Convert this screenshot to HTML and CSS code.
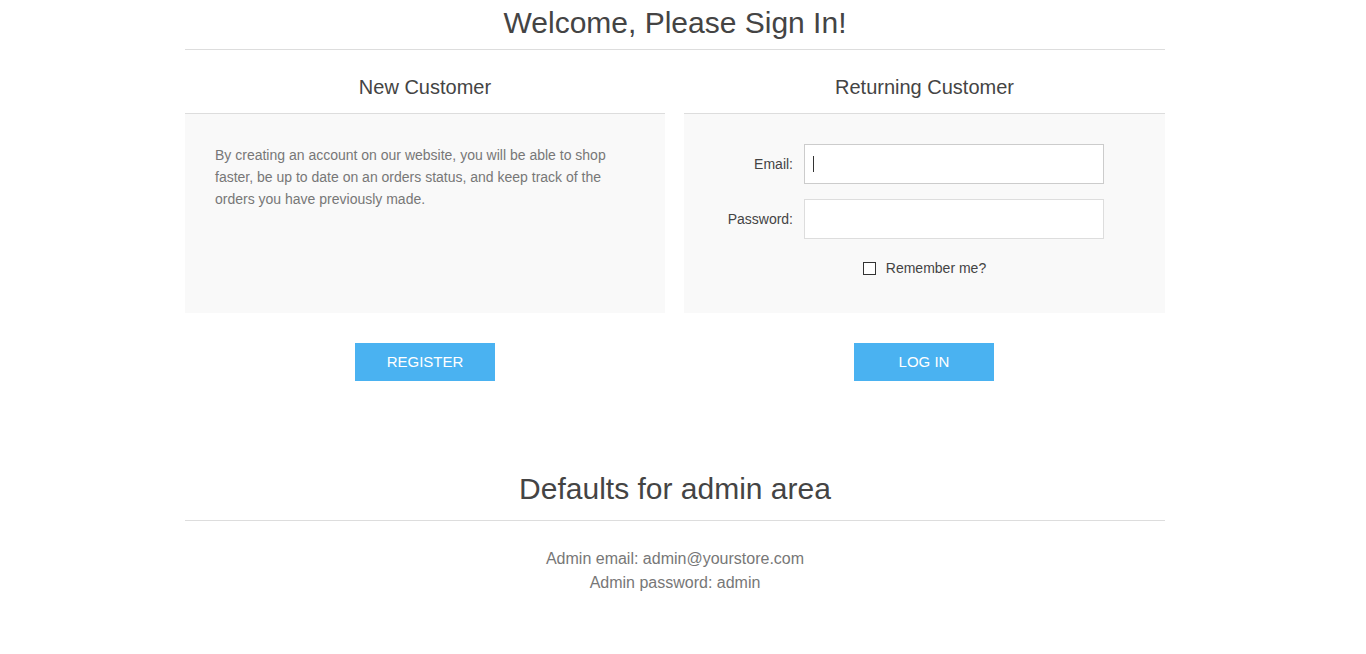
FILE: index.html
```html
<!DOCTYPE html>
<html lang="en">
<head>
<meta charset="utf-8">
<title>Login</title>
<link rel="stylesheet" href="styles.css">
</head>
<body>
<div class="page">
  <div class="page-title"><h1>Welcome, Please Sign In!</h1></div>
  <div class="columns">
    <div class="col">
      <div class="col-title"><strong>New Customer</strong></div>
      <div class="box">
        <p class="intro">By creating an account on our website, you will be able to shop faster, be up to date on an orders status, and keep track of the orders you have previously made.</p>
      </div>
      <div class="buttons"><button class="btn">Register</button></div>
    </div>
    <div class="col">
      <div class="col-title"><strong>Returning Customer</strong></div>
      <div class="box">
        <div class="form">
          <div class="row">
            <label>Email:</label>
            <span class="field focused"><input type="text"></span>
          </div>
          <div class="row">
            <label>Password:</label>
            <span class="field"><input type="password"></span>
          </div>
          <div class="remember">
            <span class="check"></span>
            <span>Remember me?</span>
          </div>
        </div>
      </div>
      <div class="buttons right"><button class="btn">Log in</button></div>
    </div>
  </div>
  <div class="page-title defaults"><h2>Defaults for admin area</h2></div>
  <div class="info">
    <div>Admin email: admin@yourstore.com</div>
    <div>Admin password: admin</div>
  </div>
</div>
</body>
</html>
```
FILE: styles.css
```css
* { box-sizing: border-box; }
html, body { margin: 0; background: #fff; }
body {
  padding-right: 16px;
  font-family: "Liberation Sans", Arial, sans-serif;
  color: #444;
}
.page {
  width: 980px;
  margin: 0 auto;
}
.page-title {
  border-bottom: 1px solid #ddd;
  padding: 3px 0 6px;
  text-align: center;
}
.page-title h1, .page-title h2 {
  margin: 0;
  font-size: 30px;
  line-height: 40px;
  font-weight: normal;
  color: #444;
}
.columns {
  display: grid;
  grid-template-columns: 480px 1fr;
  gap: 19px;
}
.col {
  display: flex;
  flex-direction: column;
}
.col-title {
  text-align: center;
  border-bottom: 1px solid #ddd;
  padding: 25px 0 14px;
  font-size: 20px;
  line-height: 24px;
}
.col-title strong { font-weight: normal; color: #444; }
.box {
  background: #f9f9f9;
  height: 199px;
  padding: 30px;
}
.intro {
  margin: 0;
  font-size: 14px;
  line-height: 22px;
  color: #777;
}
.form { margin: 0 -30px; }
.row {
  display: flex;
  align-items: center;
  margin-bottom: 15px;
}
.row label {
  width: 109px;
  text-align: right;
  margin-right: 11px;
  font-size: 14px;
  color: #444;
}
.field {
  position: relative;
  display: block;
  width: 300px;
  height: 40px;
}
.field input {
  width: 100%;
  height: 100%;
  border: 1px solid #ddd;
  background: #fff;
  margin: 0;
  padding: 0 8px;
  outline: none;
}
.field.focused input { border-color: #ccc; }
.field.focused::after {
  content: "";
  position: absolute;
  left: 9px;
  top: 12px;
  width: 1px;
  height: 16px;
  background: #333;
}
.remember {
  display: flex;
  align-items: center;
  justify-content: center;
  gap: 10px;
  margin-top: 20px;
  font-size: 14px;
  line-height: 18px;
  color: #444;
}
.check {
  width: 13px;
  height: 13px;
  border: 1px solid #333;
  background: #fff;
}
.buttons {
  text-align: center;
  padding-top: 30px;
}
.buttons.right { padding-right: 1px; }
.btn {
  width: 140px;
  height: 38px;
  border: none;
  background: #4ab2f1;
  color: #fff;
  font-family: "Liberation Sans", Arial, sans-serif;
  font-size: 15px;
  line-height: 38px;
  text-transform: uppercase;
  padding: 0;
  cursor: pointer;
}
.defaults {
  margin-top: 88px;
  padding: 0 0 11px;
}
.info {
  text-align: center;
  padding-top: 26px;
  font-size: 16px;
  line-height: 24px;
  color: #777;
}
```
